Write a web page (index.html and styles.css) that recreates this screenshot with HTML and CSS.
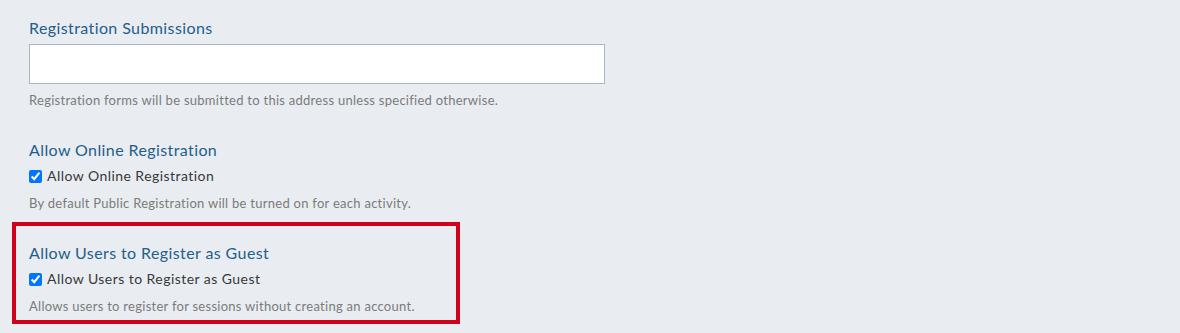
FILE: index.html
```html
<!DOCTYPE html>
<html lang="en">
<head>
<meta charset="utf-8">
<title>Registration Settings</title>
<link rel="stylesheet" href="styles.css">
</head>
<body>
<div class="settings">
  <div class="field field-first">
    <label class="field-title" for="reg-email">Registration Submissions</label>
    <input class="text-input" id="reg-email" type="text">
    <p class="help">Registration forms will be submitted to this address unless specified otherwise.</p>
  </div>
  <div class="field">
    <div class="field-title">Allow Online Registration</div>
    <label class="check"><input type="checkbox" checked><span>Allow Online Registration</span></label>
    <p class="help">By default Public Registration will be turned on for each activity.</p>
  </div>
  <div class="field field-highlight">
    <div class="field-title">Allow Users to Register as Guest</div>
    <label class="check"><input type="checkbox" checked><span>Allow Users to Register as Guest</span></label>
    <p class="help">Allows users to register for sessions without creating an account.</p>
  </div>
</div>
</body>
</html>
```
FILE: styles.css
```css
html, body {
  margin: 0;
  padding: 0;
  background: #e9edf1;
}
body {
  font-family: Lato, "Open Sans", sans-serif;
  color: #333;
}
.settings {
  display: flex;
  flex-direction: column;
  align-items: flex-start;
  gap: 1px;
  padding-left: 12px;
}
.field {
  display: flex;
  flex-direction: column;
  align-items: flex-start;
  border: 4px solid transparent;
  padding: 17px 13px 5px;
}
.field-first {
  padding-top: 14px;
}
.field-highlight {
  border-color: #d0021b;
  width: 448px;
  box-sizing: border-box;
}
.field-title {
  display: block;
  font-size: 16px;
  line-height: 20px;
  letter-spacing: 0.4px;
  color: #245d8b;
  margin: 0 0 6px;
}
.text-input {
  width: 576px;
  height: 40px;
  box-sizing: border-box;
  border: 1px solid #a9b6c5;
  background: #fff;
  margin: 0;
  padding: 0 10px;
  font: inherit;
}
.help {
  margin: 7px 0 0;
  font-size: 13px;
  line-height: 18px;
  letter-spacing: 0.27px;
  color: #7b7b7b;
}
.check {
  display: flex;
  align-items: center;
  gap: 5px;
  font-size: 14px;
  line-height: 20px;
  letter-spacing: 0.45px;
  color: #383838;
}
.check input {
  margin: 0;
  width: 13px;
  height: 13px;
}
.check + .help {
  margin-top: 8px;
}
```
